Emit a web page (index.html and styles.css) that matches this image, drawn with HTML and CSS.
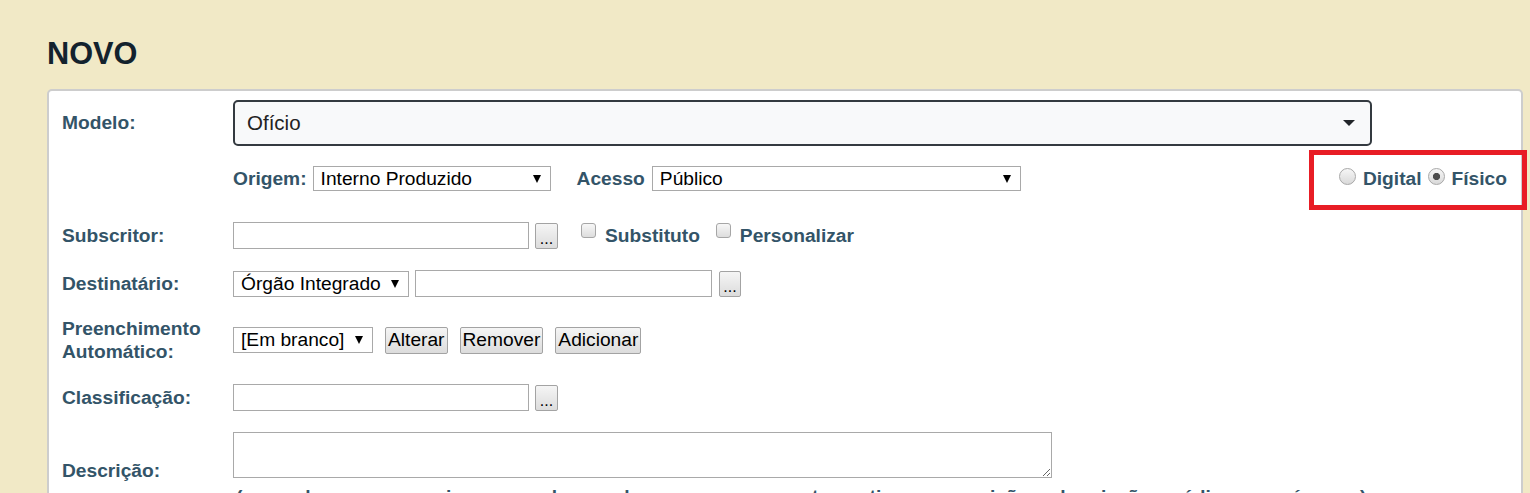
FILE: index.html
```html
<!DOCTYPE html>
<html lang="pt-BR">
<head>
<meta charset="utf-8">
<title>Novo documento</title>
<link rel="stylesheet" href="styles.css">
</head>
<body>
<main class="page">
  <h1 class="title">NOVO</h1>
  <form class="card">
    <div class="row row-modelo">
      <label class="lbl">Modelo:</label>
      <div class="ctl">
        <div class="chosen"><span>Ofício</span><span class="caret"></span></div>
      </div>
    </div>

    <div class="row row-origem">
      <span></span>
      <div class="ctl">
        <label class="lbl">Origem:</label>
        <span class="sel sel-origem"><select><option>Interno Produzido</option></select></span>
        <label class="lbl lbl-acesso">Acesso</label>
        <span class="sel sel-acesso"><select><option>Público</option></select></span>
        <div class="radios">
          <label class="radio"><input type="radio" name="tipo"> Digital</label>
          <label class="radio"><input type="radio" name="tipo" checked> Físico</label>
          <span class="highlight"></span>
        </div>
      </div>
    </div>

    <div class="row row-sub">
      <label class="lbl">Subscritor:</label>
      <div class="ctl">
        <input class="txt" type="text">
        <button class="btn dots" type="button">...</button>
        <label class="chk chk-first"><input type="checkbox"> Substituto</label>
        <label class="chk"><input type="checkbox"> Personalizar</label>
      </div>
    </div>

    <div class="row row-dest">
      <label class="lbl">Destinatário:</label>
      <div class="ctl">
        <span class="sel sel-dest"><select><option>Órgão Integrado</option></select></span>
        <input class="txt txt-dest" type="text">
        <button class="btn dots dots-dest" type="button">...</button>
      </div>
    </div>

    <div class="row row-pre">
      <label class="lbl">Preenchimento<br>Automático:</label>
      <div class="ctl">
        <span class="sel sel-pre"><select><option>[Em branco]</option></select></span>
        <button class="btn act" type="button">Alterar</button>
        <button class="btn act" type="button">Remover</button>
        <button class="btn act" type="button">Adicionar</button>
      </div>
    </div>

    <div class="row row-class">
      <label class="lbl">Classificação:</label>
      <div class="ctl">
        <input class="txt" type="text">
        <button class="btn dots" type="button">...</button>
      </div>
    </div>

    <div class="row row-desc">
      <label class="lbl lbl-desc">Descrição:</label>
      <div class="ctl">
        <textarea class="area"></textarea>
      </div>
      <p class="hint">(preencher o campo acima com palavras-chave, sem usar acentos, artigos, preposições, abreviações, códigos ou números)</p>
    </div>
  </form>
</main>
</body>
</html>
```
FILE: styles.css
```css
* { box-sizing: border-box; }

html { overflow: hidden; }

html, body { margin: 0; }

body {
  background: #f1e9c6;
  font-family: "Liberation Sans", Arial, sans-serif;
  font-size: 19.2px;
  color: #000;
}

.page {
  padding: 36px 7px 0 47px;
}

.title {
  margin: 0 0 17px;
  font-size: 30.7px;
  line-height: 36px;
  font-weight: bold;
  color: #13222d;
}

.card {
  position: relative;
  width: 1476px;
  background: #fff;
  border: 2px solid #cdcdcd;
  border-radius: 5px;
  padding: 9px 14px 60px 13px;
}

.row {
  display: grid;
  grid-template-columns: 171px 1fr;
  align-items: center;
}

.row-modelo .lbl { margin-top: -2px; }
.row-origem { margin-top: 20px; }
.row-sub { margin-top: 31px; }
.row-dest { margin-top: 21px; }
.row-pre { margin-top: 20px; }
.row-class { margin-top: 21px; }
.row-desc { margin-top: 21px; align-items: end; }

.lbl {
  font-weight: bold;
  color: #335468;
  line-height: 23px;
}

.ctl {
  display: flex;
  align-items: center;
}

/* Modelo (chosen-like select) */
.chosen {
  display: flex;
  align-items: center;
  width: 1139px;
  height: 46px;
  padding: 0 15px 0 12px;
  background: #f8f9fa;
  border: 2px solid #343a40;
  border-radius: 5px;
  font-size: 20.5px;
  color: #222;
}

.caret {
  margin-left: auto;
  width: 0;
  height: 0;
  border-left: 6px solid transparent;
  border-right: 6px solid transparent;
  border-top: 6px solid #212529;
}

/* Native-looking selects */
.sel {
  position: relative;
  display: inline-block;
}

.sel select {
  appearance: none;
  -webkit-appearance: none;
  display: block;
  width: 100%;
  height: 26px;
  margin: 0;
  padding: 0 20px 0 7px;
  font: inherit;
  line-height: 24px;
  color: #000;
  background: #fff;
  border: 1px solid #a9a9a9;
  border-radius: 0;
}

.sel::after {
  content: "";
  position: absolute;
  right: 10px;
  top: 50%;
  margin-top: -4px;
  border-left: 4.5px solid transparent;
  border-right: 4.5px solid transparent;
  border-top: 8px solid #000;
  pointer-events: none;
}

.sel-origem { width: 238px; margin-left: 6px; }
.sel-origem select, .sel-acesso select { height: 25px; }
.sel-acesso { width: 369px; margin-left: 7px; }
.lbl-acesso { margin-left: 26px; }
.sel-dest { width: 176px; }
.sel-pre { width: 140px; }

/* Radios */
.radios {
  position: relative;
  display: flex;
  align-items: center;
  gap: 6px;
  margin-left: auto;
}

.radio {
  display: flex;
  align-items: center;
  gap: 7px;
  font-weight: bold;
  color: #335468;
  line-height: 23px;
}

.radio input {
  appearance: none;
  -webkit-appearance: none;
  width: 17px;
  height: 17px;
  margin: 0 0 5px;
  border: 1px solid #a8a8a8;
  border-radius: 50%;
  background: linear-gradient(#f6f6f6, #d9d9d9);
}

.radio input:checked {
  background:
    radial-gradient(circle, #4b4b4b 0 3.3px, transparent 3.9px),
    linear-gradient(#f6f6f6, #d9d9d9);
}

.highlight {
  position: absolute;
  left: -30px;
  top: -17px;
  right: -20px;
  bottom: -20px;
  border: 5.5px solid #e81d25;
  pointer-events: none;
}

/* Text inputs and buttons */
.txt {
  width: 296px;
  height: 27px;
  margin: 0;
  padding: 0 4px;
  font: inherit;
  border: 1px solid #a9a9a9;
  border-radius: 0;
  background: #fff;
}

.txt-dest { width: 297px; margin-left: 6px; }

.btn {
  height: 27px;
  margin: 0;
  padding: 0 2px;
  font: inherit;
  color: #000;
  border: 1px solid #a3a3a3;
  border-radius: 2px;
  background: linear-gradient(#f5f5f5, #dcdcdc);
}

.dots {
  width: 23px;
  height: 26px;
  margin-left: 6px;
  padding: 0;
  font-size: 16px;
  line-height: 30px;
}

.dots-dest { margin-left: 7px; width: 22px; }

.act { margin-left: 12px; }

/* Checkboxes */
.chk {
  display: flex;
  align-items: flex-start;
  gap: 9px;
  margin-left: 16px;
  font-weight: bold;
  color: #335468;
  line-height: 23px;
}

.chk-first { margin-left: 23px; }

.chk input {
  appearance: none;
  -webkit-appearance: none;
  width: 15px;
  height: 15px;
  margin: -1px 0 0;
  border: 1px solid #a6a6a6;
  border-radius: 3px;
  background: linear-gradient(#f7f7f7, #dddddd);
}

/* Description */
.lbl-desc { margin-bottom: -4px; }

.area {
  display: block;
  width: 819px;
  height: 46px;
  margin: 0;
  font: inherit;
  border: 1px solid #a9a9a9;
  border-radius: 0;
  resize: both;
}

.hint {
  grid-column: 2;
  margin: 7px 0 0 3px;
  font-weight: bold;
  color: #335468;
  line-height: 23px;
  white-space: nowrap;
}
```
